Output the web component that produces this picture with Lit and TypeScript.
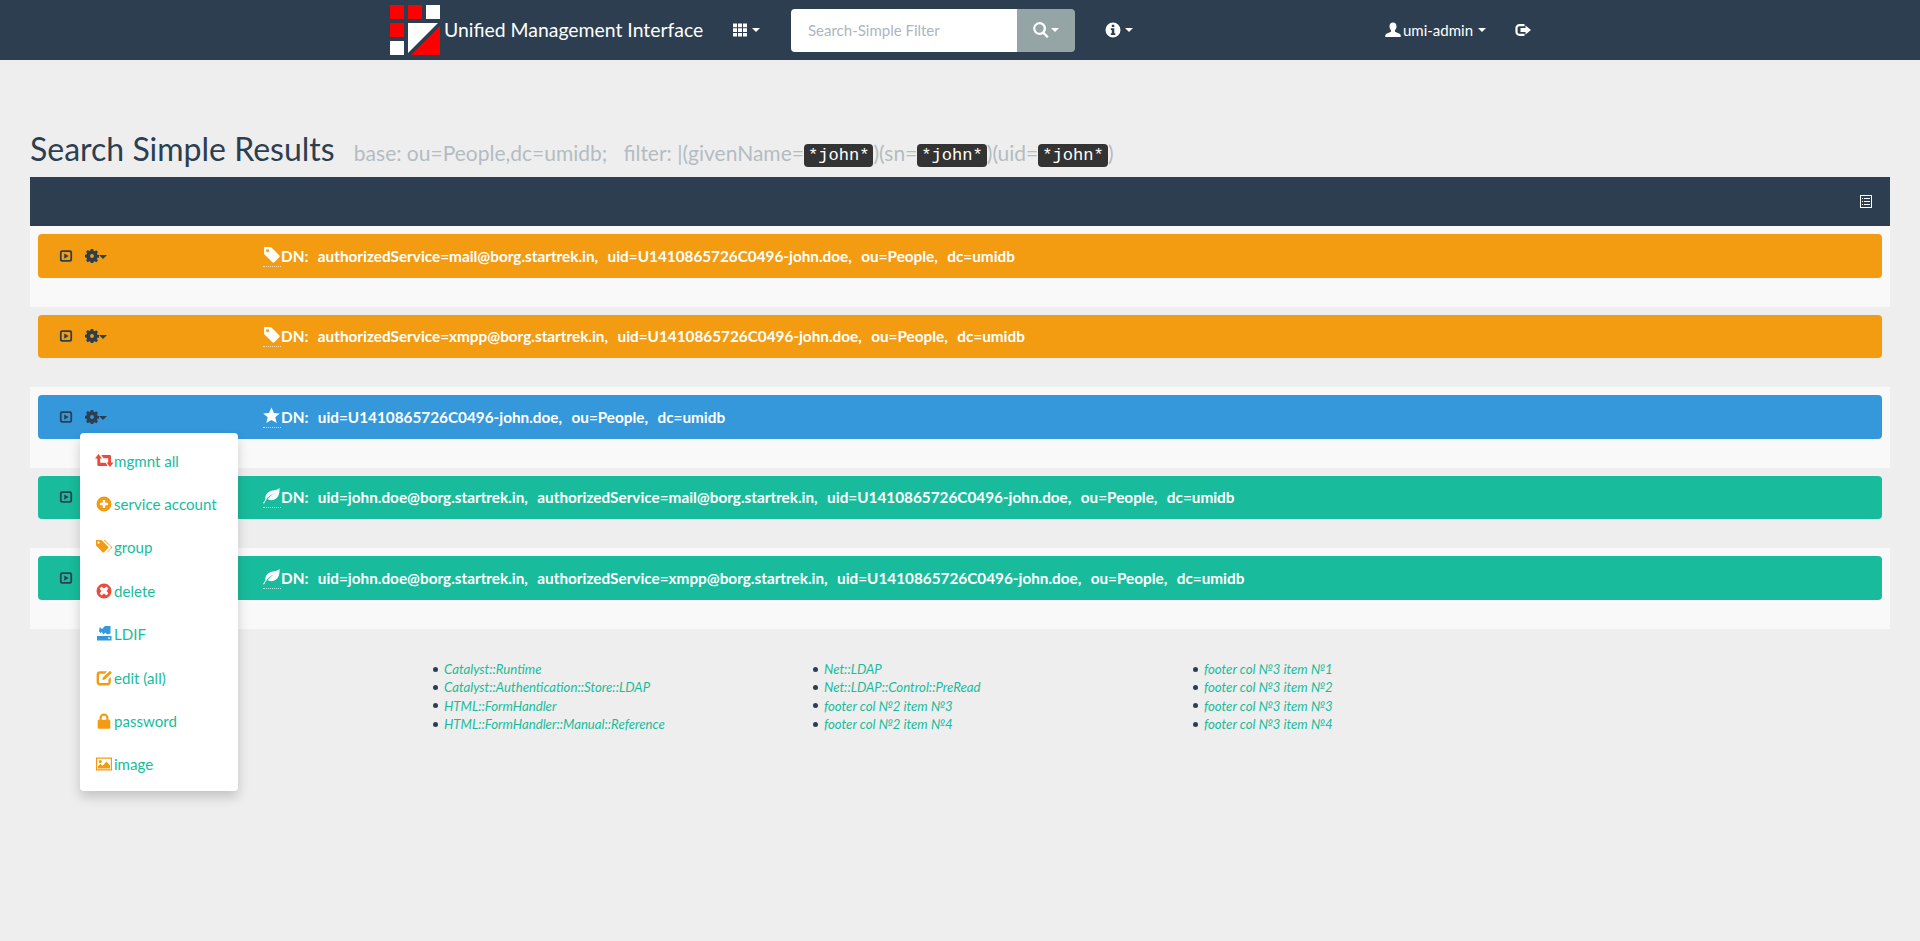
import { LitElement, html, css, svg } from "lit";
import { customElement } from "lit/decorators.js";

const gearPath =
  "M6.6 0h2.800l.4 2 1.300.6 1.700-1.100 2 2-1.100 1.700.6 1.300 2 .4v2.800l-2 .4-.6 1.300 1.100 1.700-2 2-1.700-1.100-1.300.6-.4 2H6.600l-.4-2-1.300-.6-1.700 1.100-2-2 1.100-1.700-.6-1.300-2-.4V6.600l2-.4.6-1.300-1.100-1.700 2-2 1.700 1.100 1.300-.6zM8 5.800a2.200 2.200 0 1 0 0 4.400 2.200 2.200 0 0 0 0-4.400z";

const icons: Record<string, any> = {
  tag: svg`<path fill="currentColor" fill-rule="evenodd" d="M1 1h6.500l7.800 7.800a1.300 1.300 0 0 1 0 1.800l-4.700 4.700a1.300 1.300 0 0 1-1.800 0L1 7.500zM4.300 3a1.400 1.400 0 1 0 0 2.800 1.400 1.400 0 0 0 0-2.800z"/>`,
  star: svg`<path fill="currentColor" d="M8 .5l2.300 5.100 5.500.5-4.200 3.600 1.300 5.400L8 12.300l-4.900 2.800 1.300-5.400L.2 6.100l5.500-.5z"/>`,
  leaf: svg`<path fill="currentColor" fill-rule="evenodd" d="M15.500 1C16 6 14.500 12 8 12.400c-1.500.1-2.800-.3-3.700-.8C6 9 8.500 7 11 5.800 8 6.500 4.500 9 2.600 12.600 1.800 14 1.300 15 .7 15.600L0 15c1-1 1.600-2.300 2.300-3.700C1.600 7 5 3.600 9.500 3.200c2.500-.2 4.500-.7 6-2.200z"/>`,
  plus: svg`<path fill="currentColor" fill-rule="evenodd" d="M8 .5a7.500 7.500 0 1 0 0 15 7.500 7.500 0 0 0 0-15zM6.800 4h2.400v2.800H12v2.400H9.200V12H6.800V9.200H4V6.800h2.800z"/>`,
  tags: svg`<path fill="currentColor" fill-rule="evenodd" d="M0 1h5.500l6.700 6.700a1 1 0 0 1 0 1.400l-4.200 4.200a1 1 0 0 1-1.400 0L0 6.600zM2.600 2.600a1.100 1.100 0 1 0 0 2.200 1.100 1.100 0 0 0 0-2.200z"/><path fill="currentColor" d="M7.500 1h1.300l7 6.700a1 1 0 0 1 0 1.400l-4.200 4.200a1 1 0 0 1-1 .2l3.900-3.900a1.700 1.700 0 0 0 0-2.400z"/>`,
  del: svg`<path fill="currentColor" fill-rule="evenodd" d="M8 .5a7.500 7.500 0 1 0 0 15 7.500 7.500 0 0 0 0-15zM5.600 3.600L8 5.400l2.400-1.800 2 2L10.600 8l1.800 2.400-2 2L8 10.600l-2.400 1.800-2-2L5.400 8 3.600 5.600z"/>`,
  ldif: svg`<path fill="currentColor" d="M3.700 1L6 3l3-3h5.500v7.500L11 8.500 9.500 6.500l-2 2L5.500 5.500 5 7.500 3 5.500zM1 10h14.500v4.500H1zM12 11.500v1.300h2v-1.300z"/>`,
  edit: svg`<path fill="currentColor" fill-rule="evenodd" d="M4 1.300h7l-2.200 2.400H4c-.6 0-1 .4-1 1v7.400c0 .6.400 1 1 1h7.400c.6 0 1-.4 1-1V9.500l2.400-2.400v5c0 1.900-1.500 3.400-3.400 3.400H4A3.400 3.400 0 0 1 .6 12.100V4.700A3.400 3.400 0 0 1 4 1.300zM14 .8l1.900 1.900L9 9.500l-2.700.6.600-2.700z"/>`,
  lock: svg`<path fill="currentColor" fill-rule="evenodd" d="M8 .5a4.500 4.500 0 0 0-4.500 4.500v1.800H3a1.300 1.300 0 0 0-1.300 1.300v6.300c0 .7.600 1.300 1.300 1.300h10c.7 0 1.300-.6 1.300-1.300V8.100c0-.7-.6-1.300-1.300-1.300h-.5V5A4.500 4.500 0 0 0 8 .5zM8 2.700A2.300 2.300 0 0 1 10.300 5v1.800H5.700V5A2.300 2.300 0 0 1 8 2.700z"/>`,
  image: svg`<path fill="currentColor" fill-rule="evenodd" d="M0 1.500h16v13H0zM1.200 2.700v10.600h13.600V2.700z"/><circle fill="currentColor" cx="4.200" cy="5.500" r="1.500"/><path fill="currentColor" d="M2 12.500V10l2.500-2 2 1.700L10.500 5.500l3.500 4v3z"/>`,
  play: svg`<path fill="currentColor" fill-rule="evenodd" d="M3.500 1.500h9a2.500 2.500 0 0 1 2.500 2.500v8a2.500 2.500 0 0 1-2.500 2.500h-9A2.500 2.500 0 0 1 1 12V4a2.500 2.500 0 0 1 2.500-2.500zM4 3.500c-.6 0-1 .4-1 1v7c0 .6.400 1 1 1h8c.6 0 1-.4 1-1v-7c0-.6-.4-1-1-1zM6 5l5 3-5 3z"/>`,
  gear: svg`<path fill="currentColor" fill-rule="evenodd" d="${gearPath}"/>`,
  th: svg`<path fill="currentColor" d="M1 1.500h4v3.700H1zM6 1.500h4v3.700H6zM11 1.500h4v3.700h-4zM1 6.200h4v3.700H1zM6 6.200h4v3.700H6zM11 6.200h4v3.700h-4zM1 10.900h4v3.700H1zM6 10.900h4v3.700H6zM11 10.900h4v3.700h-4z"/>`,
  search: svg`<path fill="currentColor" fill-rule="evenodd" d="M6.500 0a6.500 6.500 0 0 1 5.200 10.400l4 4-1.700 1.700-4-4A6.500 6.500 0 1 1 6.500 0zm0 2.300a4.200 4.200 0 1 0 0 8.400 4.200 4.200 0 0 0 0-8.400z"/>`,
  info: svg`<path fill="currentColor" fill-rule="evenodd" d="M8 .5a7.500 7.500 0 1 0 0 15 7.500 7.500 0 0 0 0-15zM6.800 2.800h2.500v2.300H6.800zM5.800 6.200h3.500v5h1v1.800H5.800v-1.800h1V8H5.800z"/>`,
  user: svg`<path fill="currentColor" d="M8 .5c2.200 0 3.500 1.700 3.500 3.900 0 1.600-.7 3-1.500 3.800v1.500l4.500 2c.8.4 1.200 1 1.200 1.800v1.500H.3V13.500c0-.8.4-1.400 1.200-1.800l4.500-2V8.200C5.200 7.400 4.500 6 4.500 4.400 4.500 2.200 5.800.5 8 .5z"/>`,
  logout: svg`<path fill="currentColor" fill-rule="evenodd" d="M4.500 2h5v2.200h-5C3.400 4.200 2.600 5 2.600 6v4c0 1 .8 1.800 1.900 1.800h5V14h-5A4 4 0 0 1 .4 10V6a4 4 0 0 1 4.100-4zM10.500 3.500L16 8l-5.500 4.500V10H5.500V6h5z"/>`,
};

const rows = [
  { color: "orange", icon: "tag", dn: ["authorizedService=mail@borg.startrek.in", "uid=U1410865726C0496-john.doe", "ou=People", "dc=umidb"] },
  { color: "orange", icon: "tag", dn: ["authorizedService=xmpp@borg.startrek.in", "uid=U1410865726C0496-john.doe", "ou=People", "dc=umidb"] },
  { color: "blue", icon: "star", dn: ["uid=U1410865726C0496-john.doe", "ou=People", "dc=umidb"] },
  { color: "green", icon: "leaf", dn: ["uid=john.doe@borg.startrek.in", "authorizedService=mail@borg.startrek.in", "uid=U1410865726C0496-john.doe", "ou=People", "dc=umidb"] },
  { color: "green", icon: "leaf", dn: ["uid=john.doe@borg.startrek.in", "authorizedService=xmpp@borg.startrek.in", "uid=U1410865726C0496-john.doe", "ou=People", "dc=umidb"] },
];

const menu = [
  { icon: "retweet", color: "#e74c3c", label: "mgmnt all" },
  { icon: "plus", color: "#f39c12", label: "service account" },
  { icon: "tags", color: "#f39c12", label: "group" },
  { icon: "del", color: "#e74c3c", label: "delete" },
  { icon: "ldif", color: "#3498db", label: "LDIF" },
  { icon: "edit", color: "#f39c12", label: "edit (all)" },
  { icon: "lock", color: "#f39c12", label: "password" },
  { icon: "image", color: "#f39c12", label: "image" },
];

const footer = [
  ["Catalyst::Runtime", "Catalyst::Authentication::Store::LDAP", "HTML::FormHandler", "HTML::FormHandler::Manual::Reference"],
  ["Net::LDAP", "Net::LDAP::Control::PreRead", "footer col №2 item №3", "footer col №2 item №4"],
  ["footer col №3 item №1", "footer col №3 item №2", "footer col №3 item №3", "footer col №3 item №4"],
];

const icon = (name: string, size = 16) =>
  name === "retweet"
    ? html`<svg class="ico" width="19" height="13" viewBox="0 0 19 13">
        <path
          fill="currentColor"
          d="M3.500 0L7 4.500H5.200V8.800h5.300l2.200 3.200H3.500A1.200 1.200 0 0 1 2.300 10.800V4.500H0zM6.300 1h8.500c.7 0 1.200.5 1.200 1.200V8.500h2.500L15 13l-3.500-4.500h1.700V4.200H8.500z"
        />
      </svg>`
    : html`<svg class="ico" width=${size} height=${size} viewBox="0 0 16 16">${icons[name]}</svg>`;

@customElement("app-root")
export class AppRoot extends LitElement {
  static styles = css`
    * {
      box-sizing: border-box;
    }

    :host {
      display: block;
      min-height: 941px;
      background: #eeeeee;
      color: #2c3e50;
      font-family: Lato, "Liberation Sans", sans-serif;
      font-size: 15px;
    }

    .ico {
      display: block;
      flex: none;
    }

    .caret {
      width: 0;
      height: 0;
      border-top: 4px solid currentColor;
      border-left: 4px solid transparent;
      border-right: 4px solid transparent;
      flex: none;
    }

    nav {
      height: 60px;
      background: #2c3e50;
      color: #fff;
      display: flex;
      align-items: center;
      padding-left: 390px;
    }

    .logo {
      display: block;
      flex: none;
    }

    .brand {
      font-size: 19.4px;
      margin: -2px 0 0 4px;
      width: 288px;
      white-space: nowrap;
    }

    .navbtn {
      display: flex;
      align-items: center;
      gap: 4px;
    }

    .search {
      display: flex;
      height: 43px;
      margin-left: 31px;
      width: 284px;
    }

    .search .input {
      width: 226px;
      background: #fff;
      border-radius: 4px 0 0 4px;
      color: #acb6c0;
      display: flex;
      align-items: center;
      padding-left: 17px;
    }

    .search .btn {
      width: 58px;
      background: #95a5a6;
      border-radius: 0 4px 4px 0;
      display: flex;
      align-items: center;
      justify-content: center;
      gap: 2px;
    }

    .user {
      margin-left: 252px;
      gap: 2px;
    }

    .user .caret {
      margin-left: 3px;
    }

    .logout {
      margin-left: 29px;
    }

    main {
      padding: 0 30px;
    }

    h1 {
      margin: 0;
      padding-top: 71px;
      height: 117px;
      font-size: 32px;
      font-weight: 400;
      line-height: 36px;
      white-space: nowrap;
    }

    h1 small {
      margin-left: 11px;
      font-size: 21px;
      color: #b4bcc2;
      font-weight: 400;
    }

    code {
      font-family: "Liberation Mono", monospace;
      font-size: 17.1px;
      background: #333;
      color: #fff;
      border-radius: 4px;
      padding: 2px 4px;
      vertical-align: 1px;
    }

    .head {
      height: 49px;
      background: #2c3e50;
      color: #fff;
      display: flex;
      align-items: center;
      justify-content: flex-end;
      padding-right: 18px;
    }

    .row {
      height: 80.5px;
      padding: 8px 8px 0;
      background: #eeeeee;
      position: relative;
    }

    .row:nth-child(odd) {
      background: #f9f9f9;
    }

    .bar {
      height: 43.5px;
      border-radius: 4px;
      display: flex;
      align-items: center;
      color: #fff;
      font-weight: 700;
      font-size: 15.3px;
      word-spacing: 1px;
      white-space: pre;
    }

    .orange {
      background: #f39c12;
    }

    .blue {
      background: #3498db;
    }

    .green {
      background: #18bc9c;
    }

    .tools {
      width: 225px;
      padding-left: 21px;
      display: flex;
      align-items: center;
      color: #2c3e50;
      flex: none;
    }

    .gear {
      display: flex;
      align-items: center;
      margin-left: 12px;
    }

    .gear .caret {
      margin-top: 2px;
    }

    .kind {
      display: block;
      border-bottom: 1px dotted rgba(255, 255, 255, 0.7);
      width: 18px;
      padding-bottom: 3px;
      margin-top: 1px;
    }

    .menu {
      position: absolute;
      left: 50px;
      top: 46px;
      width: 158px;
      height: 358px;
      background: #fff;
      border-radius: 4px;
      box-shadow: 0 6px 12px rgba(0, 0, 0, 0.18);
      padding: 6px 0 0 14px;
      z-index: 2;
    }

    .menu .item {
      height: 43.4px;
      display: flex;
      align-items: center;
      color: #18bc9c;
      font-size: 15.1px;
      white-space: nowrap;
    }

    .menu .slot {
      width: 20px;
      flex: none;
      display: flex;
      justify-content: center;
    }

    footer {
      display: grid;
      grid-template-columns: 380px 380px 380px;
      padding: 31.5px 0 0 403px;
      font-size: 13.2px;
      font-style: italic;
    }

    footer ul {
      margin: 0;
      padding: 0;
      list-style: none;
      line-height: 18.3px;
    }

    footer li {
      display: flex;
      align-items: center;
      gap: 6px;
    }

    footer li::before {
      content: "";
      width: 5px;
      height: 5px;
      border-radius: 50%;
      background: #2c3e50;
      flex: none;
    }

    footer a {
      color: #18bc9c;
    }
  `;

  render() {
    return html`
      <nav>
        <svg class="logo" width="50" height="50" viewBox="0 0 50 50" shape-rendering="crispEdges">
          <rect x="0" y="0" width="14" height="14" fill="#f00" />
          <rect x="18" y="0" width="14" height="14" fill="#f00" />
          <rect x="36" y="0" width="14" height="14" fill="#fff" />
          <rect x="0" y="18" width="14" height="14" fill="#f00" />
          <rect x="0" y="36" width="14" height="14" fill="#fff" />
          <polygon points="18,18 48,18 18,48" fill="#fff" shape-rendering="auto" />
          <polygon points="50,21 50,50 21,50" fill="#f00" shape-rendering="auto" />
        </svg>
        <span class="brand">Unified Management Interface</span>
        <span class="navbtn">${icon("th")}<span class="caret"></span></span>
        <div class="search">
          <div class="input">Search-Simple Filter</div>
          <div class="btn">${icon("search")}<span class="caret"></span></div>
        </div>
        <span class="navbtn" style="margin-left:30px">${icon("info")}<span class="caret"></span></span>
        <span class="navbtn user">${icon("user")}<span>umi-admin</span><span class="caret"></span></span>
        <span class="navbtn logout">${icon("logout")}</span>
      </nav>
      <main>
        <h1>
          Search Simple Results
          <small
            >base: ou=People,dc=umidb; &nbsp; filter: |(givenName=<code>*john*</code>)(sn=<code>*john*</code>)(uid=<code>*john*</code>)</small
          >
        </h1>
        <div class="head">
          <svg class="ico" width="12" height="13" viewBox="0 0 12 13" shape-rendering="crispEdges">
            <path
              fill="#fff"
              fill-rule="evenodd"
              d="M0 0h12v13H0zM1 1v11h10V1zM2 3h1v1H2zM4 3h6v1H4zM2 6h1v1H2zM4 6h6v1H4zM2 9h1v1H2zM4 9h6v1H4z"
            />
          </svg>
        </div>
        <div class="rows">
          ${rows.map(
            (r, i) => html`
              <div class="row">
                <div class="bar ${r.color}">
                  <div class="tools">
                    ${icon("play", 14)}
                    <span class="gear">${icon("gear", 14)}<span class="caret"></span></span>
                  </div>
                  <span class="kind">${icon(r.icon, 17)}</span>
                  <span>DN:  ${r.dn.join(",  ")}</span>
                </div>
                ${i === 2
                  ? html`<div class="menu">
                      ${menu.map(
                        (m) => html`<div class="item">
                          <span class="slot" style="color:${m.color}">${icon(m.icon)}</span>${m.label}
                        </div>`
                      )}
                    </div>`
                  : ""}
              </div>
            `
          )}
        </div>
        <footer>
          ${footer.map(
            (col) => html`<ul>
              ${col.map((t) => html`<li><a>${t}</a></li>`)}
            </ul>`
          )}
        </footer>
      </main>
    `;
  }
}
